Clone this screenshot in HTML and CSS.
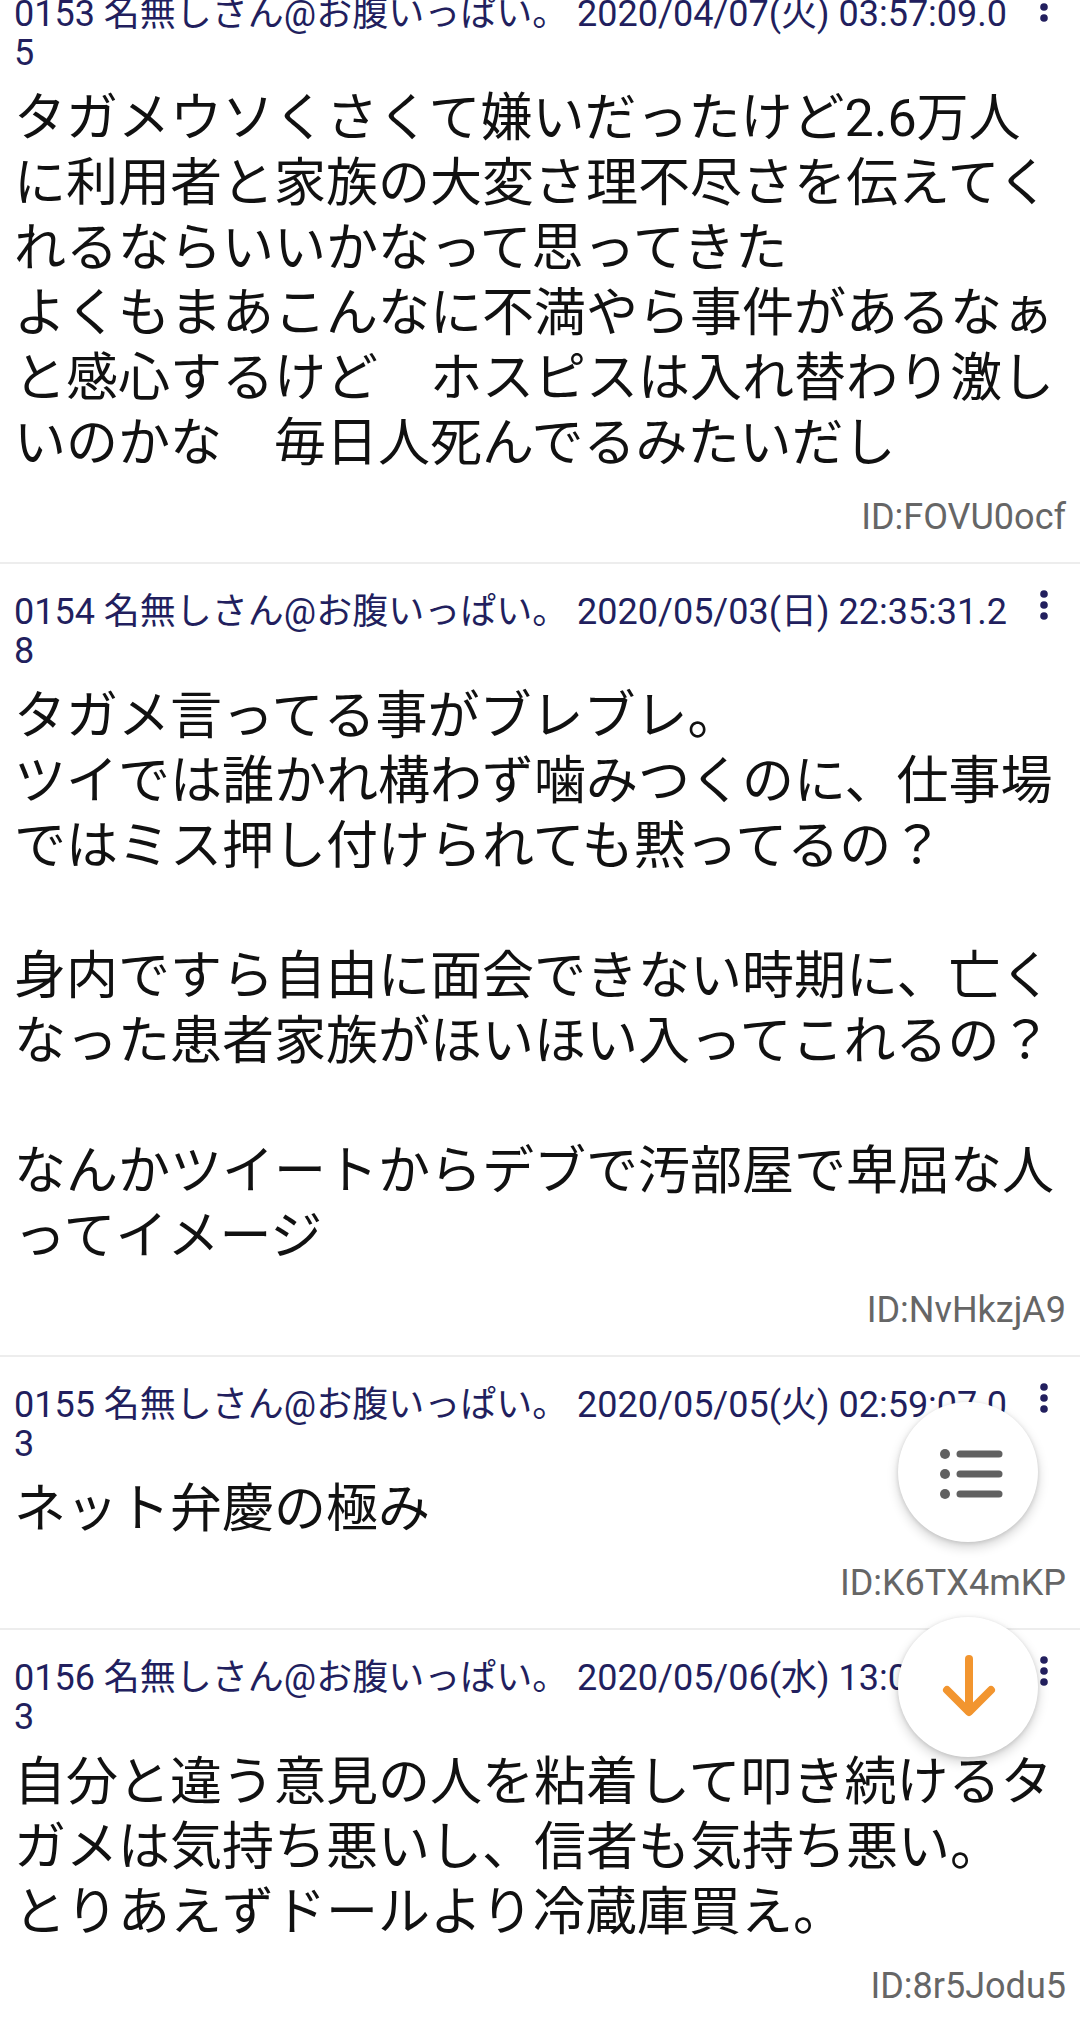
FILE: index.html
```html
<!DOCTYPE html>
<html lang="ja">
<head>
<meta charset="utf-8">
<link rel="stylesheet" href="styles.css">
</head>
<body>
<main class="thread">
  <article class="post first">
    <div class="head">
      <div class="meta">0153 名無しさん@お腹いっぱい。 2020/04/07(火) 03:57:09.05</div>
      <svg class="kebab" viewBox="0 0 44 32" width="44" height="32"><circle cx="22" cy="5" r="3.8"/><circle cx="22" cy="16" r="3.8"/><circle cx="22" cy="27" r="3.8"/></svg>
    </div>
    <div class="text">タガメウソくさくて嫌いだったけど2.6万人に利用者と家族の大変さ理不尽さを伝えてくれるならいいかなって思ってきた<br>よくもまあこんなに不満やら事件があるなぁと感心するけど　ホスピスは入れ替わり激しいのかな　毎日人死んでるみたいだし</div>
    <div class="id">ID:FOVU0ocf</div>
  </article>
  <article class="post">
    <div class="head">
      <div class="meta">0154 名無しさん@お腹いっぱい。 2020/05/03(日) 22:35:31.28</div>
      <svg class="kebab" viewBox="0 0 44 32" width="44" height="32"><circle cx="22" cy="5" r="3.8"/><circle cx="22" cy="16" r="3.8"/><circle cx="22" cy="27" r="3.8"/></svg>
    </div>
    <div class="text">タガメ言ってる事がブレブレ。<br>ツイでは誰かれ構わず噛みつくのに、仕事場ではミス押し付けられても黙ってるの？<br><br>身内ですら自由に面会できない時期に、亡くなった患者家族がほいほい入ってこれるの？<br><br>なんかツイートからデブで汚部屋で卑屈な人ってイメージ</div>
    <div class="id">ID:NvHkzjA9</div>
  </article>
  <article class="post">
    <div class="head">
      <div class="meta">0155 名無しさん@お腹いっぱい。 2020/05/05(火) 02:59:07.03</div>
      <svg class="kebab" viewBox="0 0 44 32" width="44" height="32"><circle cx="22" cy="5" r="3.8"/><circle cx="22" cy="16" r="3.8"/><circle cx="22" cy="27" r="3.8"/></svg>
    </div>
    <div class="text">ネット弁慶の極み</div>
    <div class="id">ID:K6TX4mKP</div>
  </article>
  <article class="post">
    <div class="head">
      <div class="meta">0156 名無しさん@お腹いっぱい。 2020/05/06(水) 13:04:18.13</div>
      <svg class="kebab" viewBox="0 0 44 32" width="44" height="32"><circle cx="22" cy="5" r="3.8"/><circle cx="22" cy="16" r="3.8"/><circle cx="22" cy="27" r="3.8"/></svg>
    </div>
    <div class="text">自分と違う意見の人を粘着して叩き続けるタガメは気持ち悪いし、信者も気持ち悪い。<br>とりあえずドールより冷蔵庫買え。</div>
    <div class="id">ID:8r5Jodu5</div>
  </article>
</main>
<div class="fabs">
  <div class="fab">
    <svg viewBox="0 0 140 140" width="140" height="140">
      <g fill="#616161"><circle cx="47" cy="52" r="5"/><circle cx="47" cy="72" r="5"/><circle cx="47" cy="92" r="5"/></g>
      <g stroke="#616161" stroke-width="7" stroke-linecap="round"><line x1="62" y1="52" x2="101" y2="52"/><line x1="62" y1="72" x2="101" y2="72"/><line x1="62" y1="92" x2="101" y2="92"/></g>
    </svg>
  </div>
  <div class="fab">
    <svg viewBox="0 0 140 140" width="140" height="140">
      <g fill="none" stroke="#f2952f" stroke-width="8" stroke-linecap="round" stroke-linejoin="round"><line x1="71" y1="42" x2="71" y2="94"/><polyline points="49,73 71,95 93,73"/></g>
    </svg>
  </div>
</div>
</body>
</html>
```
FILE: styles.css
```css
html, body {
  margin: 0;
  padding: 0;
  background: #ffffff;
}
body {
  font-family: Roboto, "Noto Sans CJK JP", sans-serif;
  overflow: hidden;
  height: 2020px;
}
.thread {
  display: flex;
  flex-direction: column;
}
.post {
  padding: 29px 14px 25px 14px;
  border-bottom: 2px solid #ededed;
  display: flex;
  flex-direction: column;
}
.post.first {
  margin-top: -34px;
}
.head {
  display: flex;
  align-items: flex-start;
}
.meta {
  flex: 1;
  min-width: 0;
  font-size: 36px;
  line-height: 39px;
  color: #221f5e;
  word-break: break-all;
  line-break: anywhere;
}
.kebab {
  flex: none;
  width: 44px;
  height: 32px;
  margin-top: -4px;
  fill: #221f5e;
}
.text {
  margin-top: 13px;
  font-size: 52px;
  line-height: 65px;
  color: #111111;
  word-break: break-all;
  line-break: loose;
}
.id {
  margin-top: 22px;
  font-size: 36px;
  line-height: 39px;
  color: #666666;
  text-align: right;
  padding-right: 0;
}
.fabs {
  position: absolute;
  top: 1402px;
  right: 42px;
  display: flex;
  flex-direction: column;
  gap: 75px;
}
.fab {
  width: 140px;
  height: 140px;
  border-radius: 50%;
  background: #ffffff;
  box-shadow: 0 5px 12px rgba(0, 0, 0, 0.18), 0 1px 4px rgba(0, 0, 0, 0.12);
  display: flex;
}
.fab svg {
  display: block;
}
```
